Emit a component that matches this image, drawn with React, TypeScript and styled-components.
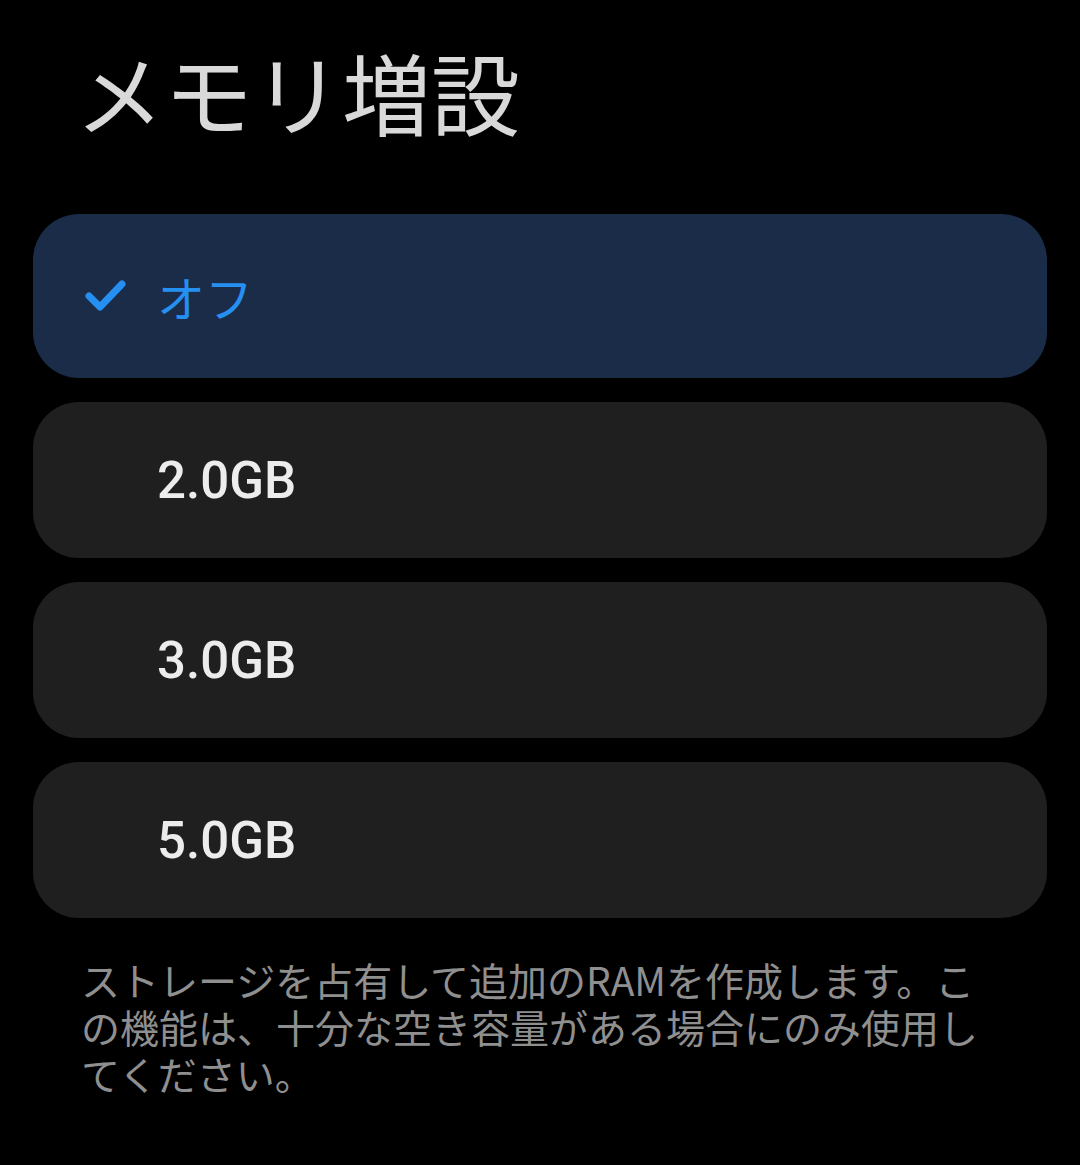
import React, { useState } from "react";
import styled, { createGlobalStyle } from "styled-components";

const GlobalStyle = createGlobalStyle`
  html, body {
    margin: 0;
    padding: 0;
    background: #000;
  }
  body {
    font-family: "Noto Sans CJK JP", Roboto, sans-serif;
  }
`;

const Page = styled.div`
  width: 1080px;
  min-height: 1165px;
  background: #000;
  padding: 0 33px;
  box-sizing: border-box;
`;

const Title = styled.h1`
  margin: 0;
  padding: 38px 0 0 42px;
  height: 214px;
  box-sizing: border-box;
  font-family: "Noto Sans CJK JP", sans-serif;
  font-weight: 400;
  font-size: 89px;
  line-height: 1.2;
  color: #d9d9d9;
`;

const OptionList = styled.div`
  display: flex;
  flex-direction: column;
  gap: 24px;
`;

const Option = styled.div<{ selected?: boolean }>`
  display: grid;
  grid-template-columns: 72px 1fr;
  align-items: center;
  height: ${(p) => (p.selected ? "164px" : "156px")};
  padding-left: 52px;
  border-radius: 46px;
  background: ${(p) => (p.selected ? "#1b2c49" : "#1f1f1f")};
  cursor: pointer;
`;

const CheckSlot = styled.div`
  display: flex;
  align-items: center;
  height: 40px;
`;

const Label = styled.span<{ selected?: boolean }>`
  font-family: ${(p) =>
    p.selected ? '"Noto Sans CJK JP", sans-serif' : 'Roboto, "Noto Sans CJK JP", sans-serif'};
  font-weight: ${(p) => (p.selected ? 400 : 500)};
  font-size: ${(p) => (p.selected ? "48px" : "51px")};
  color: ${(p) => (p.selected ? "#2590f2" : "#ececec")};
  line-height: 1;
`;

const Note = styled.p`
  margin: 0;
  padding: 38px 0 0 48px;
  width: 955px;
  box-sizing: border-box;
  font-family: "Noto Sans CJK JP", sans-serif;
  font-size: 39px;
  line-height: 47px;
  color: #8f8f8f;
`;

const CheckIcon = () => (
  <svg width="42" height="36" viewBox="0 0 42 36">
    <path
      d="M4 18 L15 29 L37 6"
      fill="none"
      stroke="#2590f2"
      strokeWidth="7"
      strokeLinecap="round"
      strokeLinejoin="round"
    />
  </svg>
);

const options = ["オフ", "2.0GB", "3.0GB", "5.0GB"];

const App: React.FC = () => {
  const [selected, setSelected] = useState<number>(0);
  return (
    <>
      <GlobalStyle />
      <Page>
        <Title>メモリ増設</Title>
        <OptionList>
          {options.map((label, i) => (
            <Option key={label} selected={i === selected} onClick={() => setSelected(i)}>
              <CheckSlot>{i === selected ? <CheckIcon /> : null}</CheckSlot>
              <Label selected={i === selected}>{label}</Label>
            </Option>
          ))}
        </OptionList>
        <Note>
          ストレージを占有して追加のRAMを作成します。この機能は、十分な空き容量がある場合にのみ使用してください。
        </Note>
      </Page>
    </>
  );
};

export default App;
